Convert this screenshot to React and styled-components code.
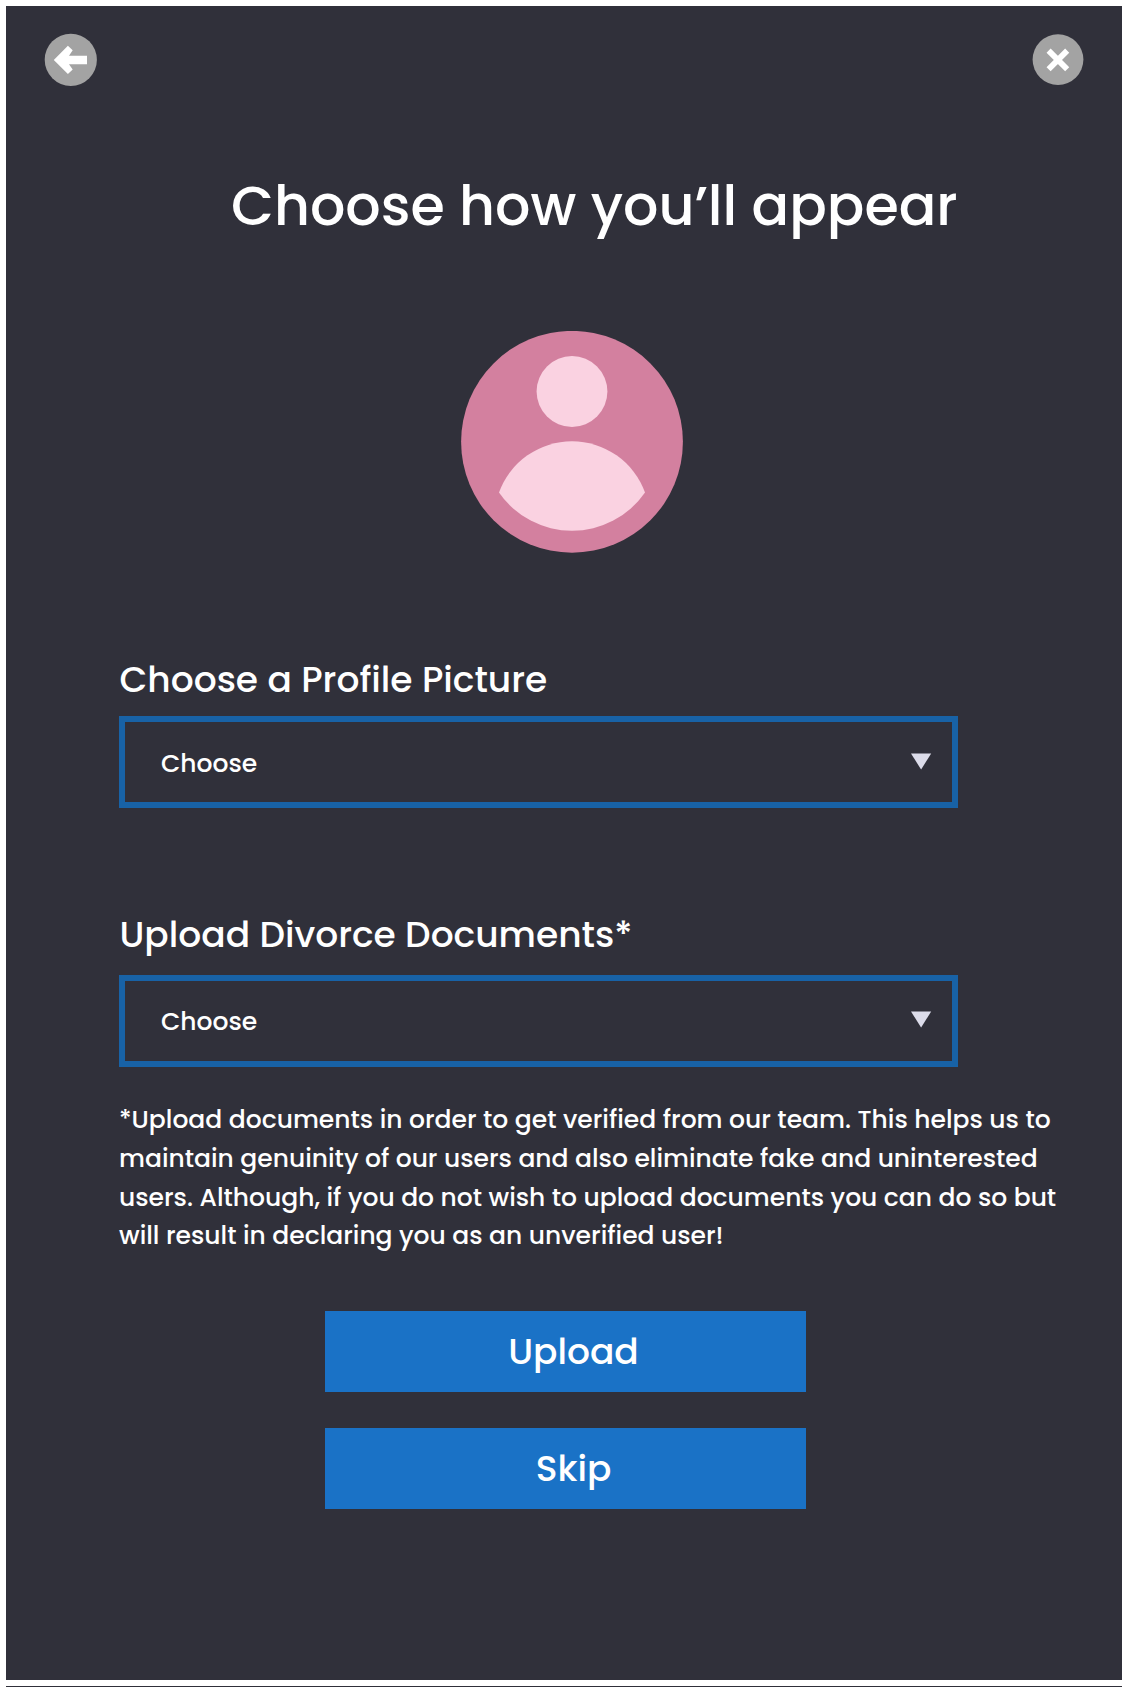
import React from "react";
import styled, { createGlobalStyle } from "styled-components";

const GlobalStyle = createGlobalStyle`
  * { box-sizing: border-box; }
  body {
    margin: 0;
    background: #ffffff;
    font-family: Poppins, Inter, "Open Sans", sans-serif;
    color: #ffffff;
  }
`;

const Page = styled.div`
  display: flex;
  flex-direction: column;
  gap: 6px;
  height: 1687px;
  padding: 6px 6px 0;
  overflow: hidden;
`;

const Screen = styled.main`
  flex: none;
  display: flex;
  flex-direction: column;
  height: 1674px;
  background: #30303a;
`;

const NextScreen = styled.div`
  flex: none;
  height: 1px;
  background: #30303a;
`;

const TopBar = styled.header`
  display: flex;
  justify-content: space-between;
  padding: 27px 38px 0;
  height: 81px;
`;

const IconButton = styled.button`
  width: 54px;
  height: 54px;
  padding: 0;
  border: 0;
  background: none;
  svg { display: block; }
`;

const Title = styled.h1`
  margin: 79px 0 0 225px;
  height: 80px;
  font-size: 55.5px;
  font-weight: 500;
  line-height: 80px;
  white-space: nowrap;
`;

const Avatar = styled.svg`
  display: block;
  flex: none;
  width: 222px;
  height: 222px;
  margin: 85px 0 0 455px;
`;

const Field = styled.section`
  display: flex;
  flex-direction: column;
  gap: ${(p) => p.$gap}px;
  margin: ${(p) => p.$top}px 0 0 113px;
  width: 839px;
`;

const Label = styled.label`
  height: 50px;
  padding-left: 0.5px;
  font-size: 36px;
  font-weight: 500;
  line-height: 50px;
  white-space: nowrap;
`;

const Select = styled.div`
  display: flex;
  align-items: center;
  justify-content: space-between;
  height: 92px;
  padding: 0 20px ${(p) => p.$lift}px 36px;
  border: 6px solid #1862a6;
`;

const SelectValue = styled.span`
  margin-top: 3px;
  font-size: 25px;
  font-weight: 500;
  line-height: 36px;
`;

const Caret = styled.svg`
  display: block;
  width: 21px;
  height: 17px;
  margin-bottom: 2px;
`;

const Note = styled.p`
  margin: 34px 0 0 113px;
  font-size: 25px;
  font-weight: 500;
  line-height: 38.8px;
`;

const NoteLine = styled.span`
  display: block;
  white-space: nowrap;
`;

const Actions = styled.div`
  display: flex;
  flex-direction: column;
  gap: 36px;
  width: 481px;
  margin: 55px 0 0 319px;
`;

const ActionButton = styled.button`
  height: 81px;
  padding: 0 0 0 16px;
  border: 0;
  background: #1a72c6;
  color: #ffffff;
  font-family: inherit;
  font-size: 36px;
  font-weight: 500;
  line-height: 50px;
`;

const noteLines = [
  "*Upload documents in order to get verified from our team. This helps us to",
  "maintain genuinity of our users and also eliminate fake and uninterested",
  "users. Although, if you do not wish to upload documents you can do so but",
  "will result in declaring you as an unverified user!",
];

function ChooseField({ id, label, top, gap, lift = 0 }) {
  return (
    <Field $top={top} $gap={gap}>
      <Label id={id}>{label}</Label>
      <Select role="combobox" aria-labelledby={id} tabIndex={0} $lift={lift}>
        <SelectValue>Choose</SelectValue>
        <Caret viewBox="0 0 21 17">
          <path d="M0 0.5H20.2L10.1 16.5Z" fill="#dcdcea" />
        </Caret>
      </Select>
    </Field>
  );
}

export default function App() {
  return (
    <>
      <GlobalStyle />
      <Page>
        <Screen>
          <TopBar>
            <IconButton aria-label="Back">
              <svg width="54" height="54" viewBox="0 0 54 54">
                <circle cx="26.8" cy="26.8" r="26.1" fill="#a3a3a3" />
                <path d="M9.8 27L23.9 12.7L28.7 17.2L25 22.8H43V31.2H25L28.7 36.4L23.9 41Z" fill="#fff" />
              </svg>
            </IconButton>
            <IconButton aria-label="Close">
              <svg width="54" height="54" viewBox="0 0 54 54">
                <circle cx="28" cy="26.6" r="25.4" fill="#a3a3a3" />
                <path d="M18.6 17.6L37.2 36.2M37.2 17.6L18.6 36.2" stroke="#fff" strokeWidth="5.8" />
              </svg>
            </IconButton>
          </TopBar>

          <Title>Choose how you’ll appear</Title>

          <Avatar viewBox="0 0 222 222">
            <circle cx="111" cy="110.8" r="110.9" fill="#d3809f" />
            <circle cx="111" cy="60.5" r="35.4" fill="#fad2e1" />
            <path d="M38 161.4A77.7 77.7 0 0 1 184 161.4A88.6 88.6 0 0 1 38 161.4Z" fill="#fad2e1" />
          </Avatar>

          <ChooseField id="picture" label="Choose a Profile Picture" top={102} gap={11} />
          <ChooseField id="documents" label="Upload Divorce Documents*" top={102} gap={15} lift={2} />

          <Note>
            {noteLines.map((line) => (
              <NoteLine key={line}>{line}</NoteLine>
            ))}
          </Note>

          <Actions>
            <ActionButton>Upload</ActionButton>
            <ActionButton>Skip</ActionButton>
          </Actions>
        </Screen>
        <NextScreen />
      </Page>
    </>
  );
}
